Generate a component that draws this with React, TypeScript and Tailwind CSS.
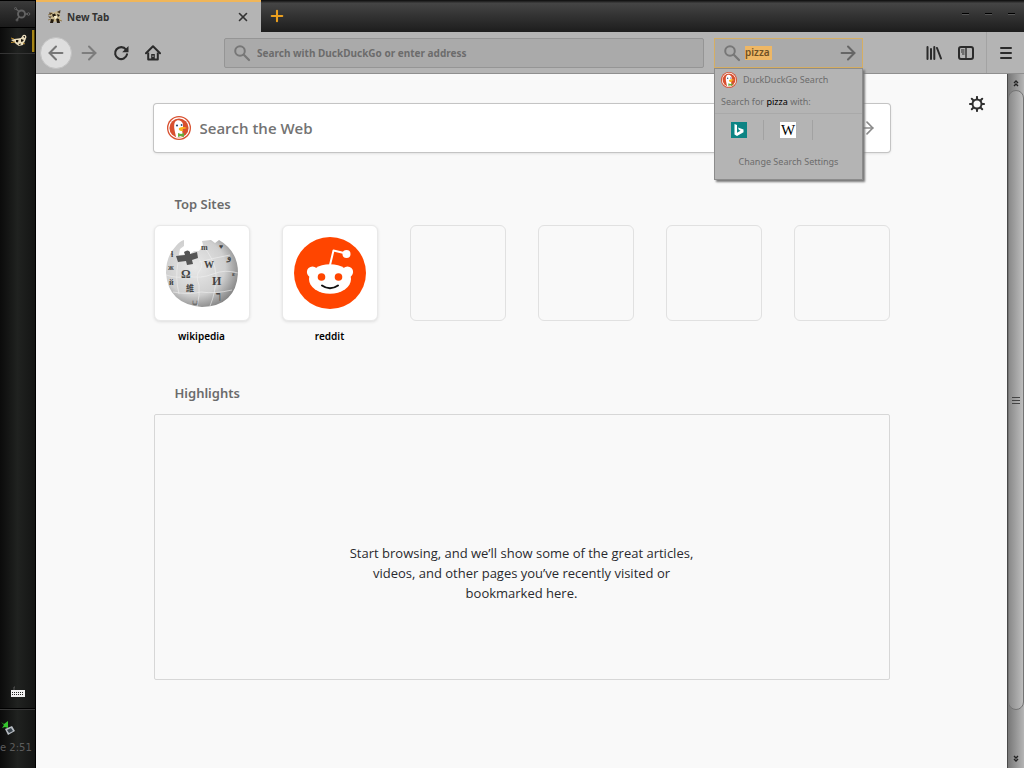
import React, { useState } from 'react';
import { ArrowLeft, ArrowRight, X, Plus } from 'lucide-react';

const topSites = ['wikipedia', 'reddit', null, null, null, null];

function RaccoonIcon({ className }: { className?: string }) {
  return (
    <svg viewBox="0 0 18 16" className={className} aria-hidden="true">
      <path d="M4 7 L5 3 L8 3.5 L11 2 L14 3.5 L13.5 7 L15 11 L12 14 L10 12.5 L7 13 L4 12 L5 9 Z" fill="#c9b88e" />
      <path d="M3 3.5 L7 4 L4 6 Z M11 3 L14.5 1 L14 4.5 Z M2 7.5 H6 L4 9 Z" fill="#4a3820" />
      <path d="M6 5.5 L9 4.5 L10 6.5 L7 8 Z M11 5 L14 6 L12 8 Z M5 10 L8 10.5 L7 14 H4 Z M10 9 L13 10 L14 14 H11 Z" fill="#231a0f" />
      <path d="M8 7 H11 V9.5 L9 10 Z" fill="#f8eecd" />
      <path d="M2 6 L5 5 M2 11 L5 10 M13 11 L16 12" stroke="#8b6c35" strokeWidth="0.8" />
    </svg>
  );
}

function TaskIcon() {
  return (
    <svg viewBox="0 0 18 14" className="h-3.5 w-[18px]" aria-hidden="true">
      <path d="M4 5 L8 4.5 L11 4 L13 1 Q16 0 16.5 3 L15 7 L13 11 L9 12 L6 10 L4 8 L1 6 Z" fill="#e9dcbb" />
      <path d="M13 2.5 L15 2 L15 4 Z M6 6 L8.5 6 L8 8.5 L6 8 Z M11 5 L14 6 L12 8 L11 7.5 Z M8.5 10 L11 9.5 L10 11.5 Z" fill="#17120b" />
      <path d="M1 4 L4 5 M1 8.5 L5 8 M13 9 L15 10" stroke="#b98b2c" />
    </svg>
  );
}

function DuckIcon({ className }: { className?: string }) {
  return (
    <svg viewBox="0 0 24 24" className={className} aria-hidden="true">
      <circle cx="12" cy="12" r="12" fill="#d8502f" />
      <circle cx="12" cy="12" r="10.7" fill="#fff" />
      <circle cx="12" cy="12" r="9.6" fill="#d8502f" />
      <path d="M9 21 C8 15 6 10 8 6 C10 3 15 4 16 8 L16 12 L15 14 L16 20 Q12 22 9 21 Z" fill="#fff" />
      <circle cx="10" cy="9.5" r="1.1" fill="#28507c" />
      <circle cx="14.6" cy="9" r="0.9" fill="#28507c" />
      <path d="M12 12 Q16 10 20 12 Q18 13 15 13 Q18 15 14 15 Q11 14 12 12 Z" fill="#fbb31a" />
      <path d="M11 17 l3 1 3 -1 0 4 -3 -1 -3 1 z" fill="#64ad3c" />
    </svg>
  );
}

function MagnifierIcon() {
  return (
    <svg viewBox="0 0 18 18" className="size-[18px] shrink-0" aria-hidden="true">
      <circle cx="7" cy="7" r="4.8" fill="none" stroke="#777" strokeWidth="2" />
      <path d="M10.8 10.8 L16 16" stroke="#777" strokeWidth="2.2" strokeLinecap="round" />
    </svg>
  );
}

function ReloadIcon() {
  return (
    <svg viewBox="0 0 16 16" className="size-4" aria-hidden="true">
      <path d="M13 4.6 A6 6 0 1 0 14 9.4" fill="none" stroke="#2b2b2b" strokeWidth="2.1" strokeLinecap="round" />
      <path d="M15.5 1 V7.3 H9.2 Z" fill="#2b2b2b" />
    </svg>
  );
}

function HomeIcon() {
  return (
    <svg viewBox="0 0 16 16" className="size-4" aria-hidden="true">
      <path d="M1 8.2 L8 1.2 L15 8.2" fill="none" stroke="#2b2b2b" strokeWidth="2" strokeLinecap="round" strokeLinejoin="round" />
      <path d="M3.2 7.5 V14.6 H12.8 V7.5" fill="none" stroke="#2b2b2b" strokeWidth="2" strokeLinejoin="round" />
      <path d="M6.2 14.5 V9 H9.8 V14.5 Z" fill="#2b2b2b" />
      <rect x="7.4" y="10.5" width="1.2" height="1.4" fill="#b4b4b4" />
    </svg>
  );
}

function LibraryIcon() {
  return (
    <svg viewBox="0 0 16 16" className="size-4" aria-hidden="true">
      <path d="M1.5 2 V14 M5 4 V14 M8.3 2 V14 M11 3 L15 13.5" fill="none" stroke="#2b2b2b" strokeWidth="2" strokeLinecap="round" />
    </svg>
  );
}

function SidebarIcon() {
  return (
    <svg viewBox="0 0 16 16" className="size-4" aria-hidden="true">
      <rect x="1" y="2" width="14" height="12" rx="2" fill="none" stroke="#2b2b2b" strokeWidth="2" />
      <path d="M8 2 V14" stroke="#2b2b2b" strokeWidth="1.4" />
      <path d="M3 5 H6.5 M3 7 H6.5 M4 9 H6.5" stroke="#2b2b2b" strokeWidth="1" />
    </svg>
  );
}

function GearIcon() {
  return (
    <svg viewBox="0 0 16 16" className="size-4" aria-hidden="true">
      <circle cx="8" cy="8" r="4.5" fill="none" stroke="#2f2f2f" strokeWidth="2" />
      <path
        d="M8 0.9 V3 M8 13 V15.1 M0.9 8 H3 M13 8 H15.1 M2.8 2.8 L4.5 4.5 M11.5 11.5 L13.2 13.2 M2.8 13.2 L4.5 11.5 M11.5 4.5 L13.2 2.8"
        stroke="#2f2f2f"
        strokeWidth="2"
        strokeLinecap="round"
      />
    </svg>
  );
}

function WikipediaLogo() {
  return (
    <svg viewBox="0 0 74 72" className="h-[72px] w-[74px]" role="img" aria-label="Wikipedia">
      <defs>
        <radialGradient id="globe" cx="0.4" cy="0.4" r="0.65">
          <stop offset="0" stopColor="#e9e9e9" />
          <stop offset="0.65" stopColor="#cfcfcf" />
          <stop offset="1" stopColor="#858585" />
        </radialGradient>
      </defs>
      <path
        d="M11 9 Q15 4 19 3 L19 9 L15 12 L14 18 L25 17 L29 14 L34 14 L38 8 L37 4 L46 3 L50 6 L54 3 Q73 14 73 36 Q71 69 37 70 Q3 67 1 36 Q1 19 11 9 Z"
        fill="url(#globe)"
      />
      <path d="M11 19 L20 18 L19 15 Q23 12 25 15 L25 17 L32 15 L33 21 L27 23 L28 27 L22 28 L21 24 L13 25 Z" fill="#555" />
      <path
        d="M13 26 Q10 40 14 57 M1 38 Q13 42 22 39 Q36 42 48 37 T73 36 M34 22 Q39 27 35 33 Q30 38 34 48 Q35 58 32 70 M37 8 Q50 22 51 38 Q51 55 45 69 M8 55 Q24 58 36 55 Q50 57 67 53 M34 25 Q49 21 65 18"
        fill="none"
        stroke="#f0f0f0"
        strokeWidth="0.6"
      />
      <g fontFamily="Liberation Serif, serif" fill="#444" fontSize="11">
        <text x="16" y="41" fontSize="12">Ω</text>
        <text x="39" y="31" fontSize="10">W</text>
        <text x="47" y="48" fontSize="12">И</text>
        <text x="21" y="54" fontSize="8" fontFamily="Noto Sans CJK SC, sans-serif">維</text>
        <text x="62" y="23" fontSize="9">و</text>
        <text x="36" y="13" fontSize="8">m</text>
        <text x="54" y="12" fontSize="7">♥</text>
        <text x="51" y="62" fontSize="10">ך</text>
        <text x="3" y="33" fontSize="8">ж</text>
        <text x="4" y="48" fontSize="8">й</text>
        <text x="6" y="20" fontSize="8">ɬ</text>
        <text x="27" y="67" fontSize="8">ப</text>
        <text x="67" y="39" fontSize="7">ε</text>
      </g>
    </svg>
  );
}

function RedditLogo() {
  return (
    <svg viewBox="0 0 72 72" className="size-[72px]" role="img" aria-label="Reddit">
      <circle cx="36" cy="36" r="36" fill="#ff4500" />
      <path d="M36 28 L39.5 13.5 L50 16" fill="none" stroke="#fff" strokeWidth="2" strokeLinejoin="round" />
      <circle cx="52.5" cy="17" r="4" fill="#fff" />
      <circle cx="18.5" cy="35" r="5.6" fill="#fff" />
      <circle cx="53.5" cy="35" r="5.6" fill="#fff" />
      <ellipse cx="36" cy="42" rx="21" ry="14.8" fill="#fff" />
      <circle cx="27.5" cy="40" r="3.8" fill="#ff4500" />
      <circle cx="44.5" cy="40" r="3.8" fill="#ff4500" />
      <path d="M28 48.5 Q36 54 44 48.5" fill="none" stroke="#111" strokeWidth="2" strokeLinecap="round" />
    </svg>
  );
}

function DesktopPanel() {
  return (
    <aside className="flex w-9 shrink-0 flex-col overflow-hidden border-r border-black bg-gradient-to-r from-[#0b0b0b] via-[#202220] to-[#141514]">
      <button aria-label="Start" className="flex h-7 shrink-0 items-center justify-center border-y border-black bg-gradient-to-b from-[#3a3a3a] to-[#1b1b1b] pl-2">
        <svg viewBox="0 0 18 16" className="h-4 w-[18px]" fill="none" stroke="#626262" aria-hidden="true">
          <circle cx="8.5" cy="8" r="3.5" strokeWidth="1.9" />
          <path d="M6 5.5 L3 3 M6 10.5 L4 14 M12 8 H15" strokeWidth="1.4" />
          <circle cx="2.5" cy="2.5" r="1" />
          <circle cx="4" cy="14" r="1" />
          <circle cx="15.5" cy="8" r="1.3" />
        </svg>
      </button>
      <button aria-label="Browser window" className="flex h-[26px] shrink-0 items-center justify-end border-b border-[#343434]">
        <TaskIcon />
        <span className="ml-1 h-[22px] w-[3px] border-r border-[#4b3c00] bg-[#a58416]" />
      </button>
      <div className="flex grow flex-col justify-end">
        <div className="flex justify-center border-b border-black pb-2.5">
          <svg viewBox="0 0 14 12" className="h-3 w-3.5" aria-hidden="true">
            <path d="M3 4 V1 H4" stroke="#555" fill="none" />
            <rect x="0" y="4" width="14" height="7" fill="#f1f1f1" />
            <path d="M1 6.5 H13 M1 8.5 H13" stroke="#222" strokeWidth="1" strokeDasharray="1 1" />
          </svg>
        </div>
        <div className="h-[59px] border-t border-[#383838] pt-2.5">
          <svg viewBox="0 0 16 16" className="size-4" aria-hidden="true">
            <path d="M5 9 L12 6 L15 11 L8 15 Z" fill="#b9bec4" />
            <path d="M7 10 L11 8 L13 11 L9 13 Z" fill="#39434b" />
            <path d="M1 2 L4 4 L8 1 L8 8 L5 7 L2 8 L4 5 Z" fill="#35c52d" />
          </svg>
          <p className="pt-1 font-['DejaVu_Sans',sans-serif] text-[10px] leading-4 whitespace-nowrap text-[#5c5c5c]">e 2:51 A</p>
        </div>
      </div>
    </aside>
  );
}

function TitleBar() {
  return (
    <div className="flex h-8 bg-gradient-to-b from-[#0c0c0c] via-[#454545] via-10% to-[#1d1d1d]">
      <div className="flex w-[225px] items-center border-t-2 border-[#f0b65a] bg-[#b4b4b4] pr-[11px] pl-2.5">
        <RaccoonIcon className="h-4 w-[18px]" />
        <span className="ml-[3px] grow text-[10px] font-bold text-[#333]">New Tab</span>
        <button aria-label="Close tab" className="text-[#333]">
          <X className="size-3.5" strokeWidth={2.8} />
        </button>
      </div>
      <button aria-label="New tab" className="px-[7px] text-[#eba020]">
        <Plus className="size-[18px]" strokeWidth={2.8} />
      </button>
      <div className="ml-auto flex items-start gap-4 pt-[13px] pr-[9px]">
        <button aria-label="Minimize" className="h-0.5 w-[7px] border-b border-[#555] bg-black" />
        <button aria-label="Maximize" className="h-0.5 w-[7px] border-b border-[#555] bg-black" />
        <button aria-label="Close" className="h-0.5 w-[7px] border-b border-[#555] bg-black" />
      </div>
    </div>
  );
}

function SearchPopup() {
  return (
    <div className="absolute top-full left-0 z-10 h-[112px] w-[149px] border border-[#8c8c8c] bg-[#b4b4b4] text-[9px] leading-4 text-[#6c6c6c] shadow-[2px_2px_2px_#777]">
      <div className="flex h-[23px] items-center gap-1.5 pl-1.5">
        <DuckIcon className="size-4" />
        DuckDuckGo Search
      </div>
      <p className="h-[22px] border-b border-[#a9a9a9] pt-0.5 pl-1.5">
        Search for <span className="text-black">pizza</span> with:
      </p>
      <div className="flex h-8 items-center">
        <button aria-label="Bing" className="flex h-5 w-[49px] items-center justify-center border-r border-[#a2a2a2]">
          <svg viewBox="0 0 16 16" className="size-4" aria-hidden="true">
            <rect width="16" height="16" fill="#0c8484" />
            <path d="M3.5 2 L6 3 V10.7 L9.5 8.7 L7.8 7.8 L7 5.6 L12.5 7.5 V10.2 L6 14 L3.5 12.4 Z" fill="#fff" />
          </svg>
        </button>
        <button aria-label="Wikipedia" className="flex h-5 w-[49px] items-center justify-center border-r border-[#a2a2a2]">
          <span className="flex size-4 items-center justify-center bg-white font-['Liberation_Serif',serif] text-[15px] text-black">W</span>
        </button>
      </div>
      <button className="h-[33px] w-full">Change Search Settings</button>
    </div>
  );
}

function Toolbar() {
  const [query, setQuery] = useState('pizza');

  return (
    <div className="relative flex h-[42px] items-center border-b border-[#8f8f8f] bg-[#b4b4b4] pl-1 text-[#2b2b2b]">
      <button aria-label="Back" className="flex size-8 items-center justify-center rounded-full border border-[#c2c2c2] bg-[#dedede] text-[#777]">
        <ArrowLeft className="size-[22px]" strokeWidth={2.2} />
      </button>
      <button aria-label="Forward" className="flex w-8 justify-center pl-0.5 text-[#7d7d7d]">
        <ArrowRight className="size-[22px]" strokeWidth={2.2} />
      </button>
      <button aria-label="Reload" className="flex w-8 justify-center pl-0.5">
        <ReloadIcon />
      </button>
      <button aria-label="Home" className="flex w-8 justify-center pl-0.5">
        <HomeIcon />
      </button>
      <label className="ml-14 flex h-[30px] grow items-center rounded-xs border border-[#959595] bg-[#aaa] pl-2">
        <MagnifierIcon />
        <input
          aria-label="Address"
          placeholder="Search with DuckDuckGo or enter address"
          className="ml-1.5 min-w-0 grow pt-0.5 text-[10px] font-bold outline-none placeholder:text-[#6c6c6c]"
        />
      </label>
      <div className="relative ml-2.5 w-[149px]">
        <label className="flex h-[30px] items-center border border-[#d5ae63] bg-[#aaa] pr-[3px] pl-2 text-[#666]">
          <MagnifierIcon />
          <span className="ml-1 flex min-w-0 grow">
            <input
              aria-label="Search"
              value={query}
              onChange={(e) => setQuery(e.target.value)}
              className="h-3.5 w-[27px] bg-[#eeb765] text-[10px] font-semibold text-[#6e5026] outline-none"
            />
          </span>
          <ArrowRight className="size-[22px] shrink-0" strokeWidth={2.2} />
        </label>
        <SearchPopup />
      </div>
      <button aria-label="Library" className="ml-[55px] flex w-8 justify-center">
        <LibraryIcon />
      </button>
      <button aria-label="Sidebars" className="flex w-8 justify-center">
        <SidebarIcon />
      </button>
      <button aria-label="Menu" className="ml-1 flex h-full w-[38px] items-center justify-center border-l border-[#a3a3a3]">
        <svg viewBox="0 0 14 14" className="size-3.5" aria-hidden="true">
          <path d="M2 2 H12 M2 7 H12 M2 12 H12" stroke="#2b2b2b" strokeWidth="2" strokeLinecap="round" />
        </svg>
      </button>
    </div>
  );
}

function Scrollbar() {
  return (
    <div className="flex w-[17px] shrink-0 flex-col items-center border-l border-[#494949] bg-gradient-to-r from-[#777] to-[#b5b5b5]">
      <svg viewBox="0 0 8 16" className="h-4 w-2 shrink-0" aria-hidden="true">
        <path d="M2 9 L4 7 L6 9 M2 12 L4 10 L6 12" fill="none" stroke="#222" strokeWidth="1.4" />
      </svg>
      <div className="flex w-full grow flex-col items-center justify-center gap-0.5 rounded-full border border-[#747474] bg-gradient-to-r from-[#8a8a8a] to-[#bdbdbd]">
        <span className="h-px w-2 bg-[#444]" />
        <span className="h-px w-2 bg-[#444]" />
        <span className="h-px w-2 bg-[#444]" />
      </div>
      <div className="flex h-[58px] shrink-0 items-end pb-1">
        <svg viewBox="0 0 8 10" className="h-2.5 w-2" aria-hidden="true">
          <path d="M2 2 L4 4 L6 2 M2 5 L4 7 L6 5" fill="none" stroke="#222" strokeWidth="1.4" />
        </svg>
      </div>
    </div>
  );
}

function NewTabPage() {
  return (
    <main className="relative grow bg-[#f9f9f9] px-8 pt-[30px]">
      <button aria-label="Customize" className="absolute top-[22px] right-[22px]">
        <GearIcon />
      </button>
      <div className="mx-auto max-w-[736px]">
        <label className="flex h-12 items-center rounded-[3px] bg-white px-[13px] shadow-[0_0_0_1px_#c4c4c4,0_1px_3px_#ccc]">
          <DuckIcon className="size-6" />
          <input
            aria-label="Search the Web"
            placeholder="Search the Web"
            className="ml-[9px] grow font-['Open_Sans',sans-serif] text-[15px] font-semibold outline-none placeholder:text-[#737373]"
          />
          <ArrowRight className="size-5 text-[#8a8a8a]" strokeWidth={2} />
        </label>

        <section className="mt-[42px]">
          <h2 className="pl-[21px] text-[13px] leading-5 font-semibold text-[#6b6b6b]">Top Sites</h2>
          <ul className="mt-[11px] flex justify-between">
            {topSites.map((site, index) => (
              <li key={index} className="w-24">
                {site ? (
                  <a href={`#${site}`} className="block text-center text-[10px] leading-4 font-semibold text-black">
                    <span className="flex size-24 items-center justify-center rounded-md border border-[#e9e9e9] bg-white shadow-[0_1px_3px_#ddd]">
                      {site === 'wikipedia' ? <WikipediaLogo /> : <RedditLogo />}
                    </span>
                    <span className="mt-[7px] block">{site}</span>
                  </a>
                ) : (
                  <span className="block size-24 rounded-md border border-[#e1e1e1]" />
                )}
              </li>
            ))}
          </ul>
        </section>

        <section className="mt-[39px]">
          <h2 className="pl-[21px] text-[13px] leading-5 font-semibold text-[#6b6b6b]">Highlights</h2>
          <div className="mt-[11px] flex h-[266px] justify-center rounded-xs border border-[#d7d7d7] pt-32">
            <p className="w-[350px] text-center font-['Open_Sans',sans-serif] text-[13px] leading-5 text-[#2a2a2e]">
              Start browsing, and we’ll show some of the great articles, videos, and other pages you’ve recently visited or bookmarked here.
            </p>
          </div>
        </section>
      </div>
    </main>
  );
}

export default function App() {
  return (
    <div className="flex min-h-screen font-['Noto_Sans',sans-serif]">
      <DesktopPanel />
      <div className="flex min-w-0 grow flex-col">
        <TitleBar />
        <Toolbar />
        <div className="flex grow">
          <NewTabPage />
          <Scrollbar />
        </div>
      </div>
    </div>
  );
}
